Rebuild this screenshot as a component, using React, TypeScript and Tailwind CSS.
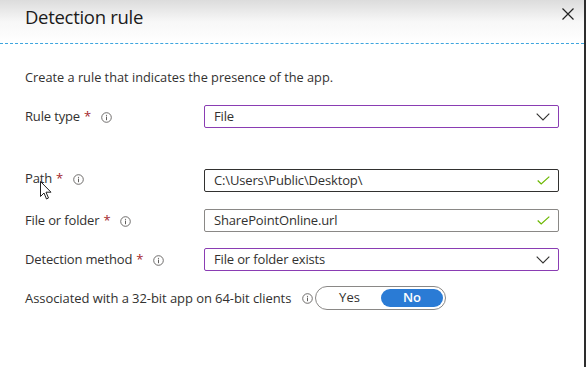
import React from "react";

const Info = () => (
  <svg width="11" height="11" viewBox="0 0 11 11" className="shrink-0">
    <circle cx="5.5" cy="5.5" r="4.8" fill="none" stroke="#605e5c" strokeWidth="0.9" />
    <circle cx="5.5" cy="3.3" r="0.6" fill="#605e5c" />
    <rect x="5" y="4.6" width="1" height="3.6" fill="#605e5c" />
  </svg>
);

const Chevron = () => (
  <svg width="14" height="8" viewBox="0 0 14 8" className="shrink-0">
    <path d="M0.7 0.7 L7 7 L13.3 0.7" fill="none" stroke="#323130" strokeWidth="1.1" />
  </svg>
);

const Check = () => (
  <svg width="13" height="9" viewBox="0 0 13 9" className="shrink-0">
    <path d="M0.7 4.5 L4.2 8 L12.3 0.6" fill="none" stroke="#6bb700" strokeWidth="1.2" />
  </svg>
);

const Label = ({ text, required = true }: { text: string; required?: boolean }) => (
  <div className="flex items-center text-[13px] text-[#323130] h-[23px]">
    <span>{text}</span>
    {required && <span className="text-[#a4262c] ml-[4px]">*</span>}
    <span className="ml-[10px] mt-[1px]"><Info /></span>
  </div>
);

export default function App() {
  return (
    <div
      className="relative w-[586px] h-[367px] bg-white overflow-hidden flex"
      style={{ fontFamily: '"Open Sans", "Noto Sans", sans-serif' }}
    >
      <div className="flex-1 flex flex-col">
        <div className="h-[43px] bg-gradient-to-b from-[#dcdcdc] via-[#f7f7f7] to-white flex items-start justify-between pl-[25px] pr-[10px]">
          <div className="text-[18.5px] text-[#1b1b1b] mt-[3px] tracking-[-0.3px]">Detection rule</div>
          <svg width="12" height="12" viewBox="0 0 12 12" className="mt-[8px]">
            <path d="M0.5 0.5 L11.5 11.5 M11.5 0.5 L0.5 11.5" stroke="#222" strokeWidth="1.2" />
          </svg>
        </div>
        <div className="h-0 border-t border-dashed border-[#3ea5de]" />
        <div className="pl-[25px] text-[12.75px] text-[#323130] mt-[24px] leading-[18px]">
          Create a rule that indicates the presence of the app.
        </div>
        <div className="grid grid-cols-[179px_355px] pl-[25px] mt-[19px] tracking-[-0.15px]">
          <Label text="Rule type" />
          <div className="h-[23px] border border-[#8a3db3] rounded-[2px] flex items-center justify-between pl-[9px] pr-[8px] text-[13px] text-[#323130]">
            <span>File</span>
            <Chevron />
          </div>

          <div className="col-span-2 h-[41px]" />

          <div className="-mt-[2px]"><Label text="Path" /></div>
          <div className="h-[23px] border border-[#323130] rounded-[2px] flex items-center justify-between pl-[9px] pr-[8px] text-[13px] text-[#323130]">
            <span>C:\Users\Public\Desktop\</span>
            <Check />
          </div>

          <div className="col-span-2 h-[17px]" />

          <Label text="File or folder" />
          <div className="h-[23px] border border-[#8a8886] rounded-[2px] flex items-center justify-between pl-[9px] pr-[8px] text-[13px] text-[#323130]">
            <span>SharePointOnline.url</span>
            <Check />
          </div>

          <div className="col-span-2 h-[16px]" />

          <Label text="Detection method" />
          <div className="h-[23px] border border-[#8a3db3] rounded-[2px] flex items-center justify-between pl-[9px] pr-[8px] text-[13px] text-[#323130]">
            <span>File or folder exists</span>
            <Chevron />
          </div>
        </div>
        <div className="flex items-center pl-[25px] mt-[16px] h-[23px] tracking-[-0.07px]">
          <span className="text-[13px] text-[#323130]">Associated with a 32-bit app on 64-bit clients</span>
        </div>
      </div>
      <div className="w-[2px] bg-[#2d2d2d]" />

      <div className="absolute left-[302px] top-[286px] flex items-center">
        <Info />
        <div className="ml-[2px] w-[131px] h-[24px] rounded-full border border-[#8a8886] flex items-center p-[2px]">
          <div className="flex-1 text-center text-[13px] text-[#323130]">Yes</div>
          <div className="w-[62px] h-[18px] rounded-full bg-[#2a7bd5] text-white text-[13px] font-semibold flex items-center justify-center">No</div>
        </div>
      </div>

      <svg className="absolute left-[40px] top-[181px]" width="12" height="19" viewBox="0 0 12 19">
        <path d="M0.5 0.5 L0.5 15.5 L4 12 L6.5 18 L8.5 17 L6 11.2 L11 11.2 Z" fill="white" stroke="#222" strokeWidth="1" strokeLinejoin="miter" />
      </svg>
    </div>
  );
}
